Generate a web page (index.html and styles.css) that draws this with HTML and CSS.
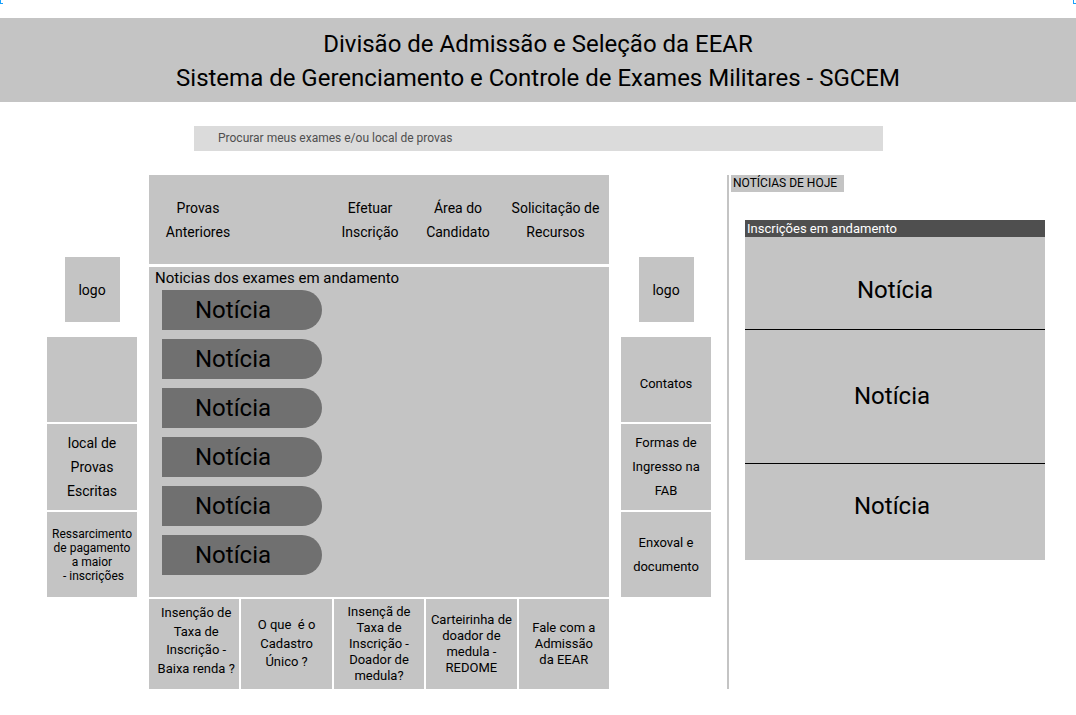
FILE: index.html
```html
<!DOCTYPE html>
<html lang="pt-BR">
<head>
    <meta charset="UTF-8">
    <meta name="viewport" content="width=device-width, initial-scale=1">
    <title>SGCEM - Divisão de Admissão e Seleção da EEAR</title>
    <link rel="stylesheet" href="styles.css">
</head>

<body>
    <span class="marca marca-esq"></span>
    <span class="marca marca-dir"></span>

    <header class="topo">
        <p>Divisão de Admissão e Seleção da EEAR</p>
        <p>Sistema de Gerenciamento e Controle de Exames Militares - SGCEM</p>
    </header>

    <div class="busca">Procurar meus exames e/ou local de provas</div>

    <main class="conteudo">
        <aside class="lateral">
            <div class="logo">logo</div>
            <div class="caixa"></div>
            <a class="caixa caixa-alta" href="#">local de<br>Provas<br>Escritas</a>
            <a class="caixa caixa-miuda" href="#">Ressarcimento<br>de pagamento<br>a maior<br>&nbsp;- inscrições</a>
        </aside>

        <section class="centro">
            <nav class="menu">
                <a class="item-provas" href="#">Provas<br>Anteriores</a>
                <a class="item-inscricao" href="#">Efetuar<br>Inscrição</a>
                <a class="item-area" href="#">Área do<br>Candidato</a>
                <a class="item-recursos" href="#">Solicitação de<br>Recursos</a>
            </nav>

            <section class="noticias">
                <h2>Noticias dos exames em andamento</h2>
                <div class="pilula">Notícia</div>
                <div class="pilula">Notícia</div>
                <div class="pilula">Notícia</div>
                <div class="pilula">Notícia</div>
                <div class="pilula">Notícia</div>
                <div class="pilula">Notícia</div>
            </section>

            <section class="links">
                <a class="link link-largo link-alto" href="#">Insenção de<br>Taxa de<br>Inscrição -<br>Baixa renda ?</a>
                <a class="link link-largo" href="#">O que &nbsp;é o<br>Cadastro<br>Único ?</a>
                <a class="link" href="#">Insençã de<br>Taxa de<br>Inscrição -<br>Doador de<br>medula?</a>
                <a class="link" href="#">Carteirinha de<br>doador de<br>medula -<br>REDOME</a>
                <a class="link" href="#">Fale com a<br>Admissão<br>da EEAR</a>
            </section>
        </section>

        <aside class="lateral lateral-dir">
            <div class="logo">logo</div>
            <a class="caixa caixa-contatos" href="#">Contatos</a>
            <a class="caixa caixa-alta" href="#">Formas de<br>Ingresso na<br>FAB</a>
            <a class="caixa" href="#">Enxoval e<br>documento</a>
        </aside>

        <div class="divisor"></div>

        <section class="hoje">
            <div class="hoje-rotulo">NOTÍCIAS DE HOJE</div>
            <div class="painel">
                <div class="painel-topo">Inscrições em andamento</div>
                <div class="painel-item item-um">Notícia</div>
                <div class="painel-item item-dois">Notícia</div>
                <div class="painel-item item-tres">Notícia</div>
            </div>
        </section>
    </main>
</body>
</html>
```

FILE: styles.css
```css
body {
    margin: 0;
    position: relative;
    background: #ffffff;
    color: #000000;
    font-family: Roboto, "Liberation Sans", sans-serif;
}

a {
    color: inherit;
    text-decoration: none;
}

/* cantinhos azuis de selecao */
.marca {
    position: absolute;
    top: 0;
    width: 2px;
    height: 3px;
    border-left: 1px solid #18a0fb;
    border-bottom: 1px solid #18a0fb;
}

.marca-esq { left: 0; }
.marca-dir { right: 0; }

.topo {
    margin-top: 18px;
    height: 84px;
    box-sizing: border-box;
    padding-top: 9px;
    background: #c4c4c4;
    text-align: center;
    font-size: 24px;
    line-height: 34px;
}

.topo p {
    margin: 0;
}

.busca {
    margin: 24px 0 0 194px;
    width: 689px;
    height: 25px;
    box-sizing: border-box;
    padding-left: 24px;
    background: #dbdbdb;
    color: #4f4f4f;
    font-size: 12px;
    line-height: 25px;
}

.conteudo {
    display: flex;
    align-items: flex-start;
    margin-top: 24px;
    padding-left: 47px;
}

/* colunas laterais */
.lateral {
    width: 90px;
    display: flex;
    flex-direction: column;
    gap: 2px;
}

.lateral-dir {
    margin-left: 12px;
    font-size: 13px;
}

.logo {
    width: 55px;
    height: 65px;
    margin: 82px auto 13px;
    background: #c4c4c4;
    display: flex;
    align-items: center;
    justify-content: center;
    font-size: 14px;
}

.caixa {
    height: 85px;
    box-sizing: border-box;
    background: #c4c4c4;
    display: flex;
    align-items: center;
    justify-content: center;
    text-align: center;
    font-size: 14px;
    line-height: 24px;
}

.lateral-dir .caixa {
    font-size: 13px;
}

.caixa-alta {
    height: 86px;
}

.caixa-miuda {
    font-size: 12px;
    line-height: 14px;
}

.caixa-contatos {
    padding-top: 8px;
}

/* coluna central */
.centro {
    width: 460px;
    margin-left: 12px;
}

.menu {
    height: 89px;
    display: flex;
    align-items: center;
    background: #c4c4c4;
    text-align: center;
    font-size: 14px;
    line-height: 24px;
}

.item-provas { width: 98px; }
.item-inscricao { width: 88px; margin-left: 79px; }
.item-area { width: 88px; }
.item-recursos { flex: 1; }

.noticias {
    margin-top: 3px;
    height: 330px;
    box-sizing: border-box;
    padding: 2px 0 0 6px;
    background: #c4c4c4;
}

.noticias h2 {
    margin: 0 0 3px;
    font-size: 15px;
    font-weight: normal;
    line-height: 18px;
}

.pilula {
    width: 160px;
    height: 40px;
    box-sizing: border-box;
    margin: 0 0 9px 7px;
    padding-left: 33px;
    border-radius: 0 20px 20px 0;
    background: #707070;
    font-size: 24px;
    line-height: 40px;
}

.links {
    margin-top: 2px;
    height: 90px;
    display: grid;
    grid-template-columns: repeat(5, 1fr);
    gap: 2px;
}

.link {
    background: #c4c4c4;
    display: flex;
    align-items: center;
    justify-content: center;
    text-align: center;
    font-size: 13px;
    line-height: 16px;
}

.link-largo {
    line-height: 18.5px;
}

.link-alto {
    padding: 0 0 6px 4px;
}

.divisor {
    width: 2px;
    height: 514px;
    margin-left: 16px;
    background: #c4c4c4;
}

/* noticias de hoje */
.hoje {
    margin-left: 2px;
    width: 314px;
}

.hoje-rotulo {
    width: 113px;
    height: 17px;
    box-sizing: border-box;
    padding-left: 2px;
    background: #c4c4c4;
    font-size: 12px;
    line-height: 17px;
}

.painel {
    width: 300px;
    margin: 28px 0 0 14px;
    background: #c4c4c4;
}

.painel-topo {
    height: 17px;
    padding-left: 2px;
    background: #4f4f4f;
    color: #ffffff;
    font-size: 13px;
    line-height: 17px;
}

.painel-item {
    box-sizing: border-box;
    border-bottom: 1px solid #000000;
    text-align: center;
    font-size: 24px;
    line-height: 28px;
}

.item-um {
    height: 93px;
    padding-top: 39px;
}

.item-dois {
    height: 134px;
    padding: 52px 6px 0 0;
}

.item-tres {
    height: 96px;
    padding: 28px 6px 0 0;
    border-bottom: none;
}
```
